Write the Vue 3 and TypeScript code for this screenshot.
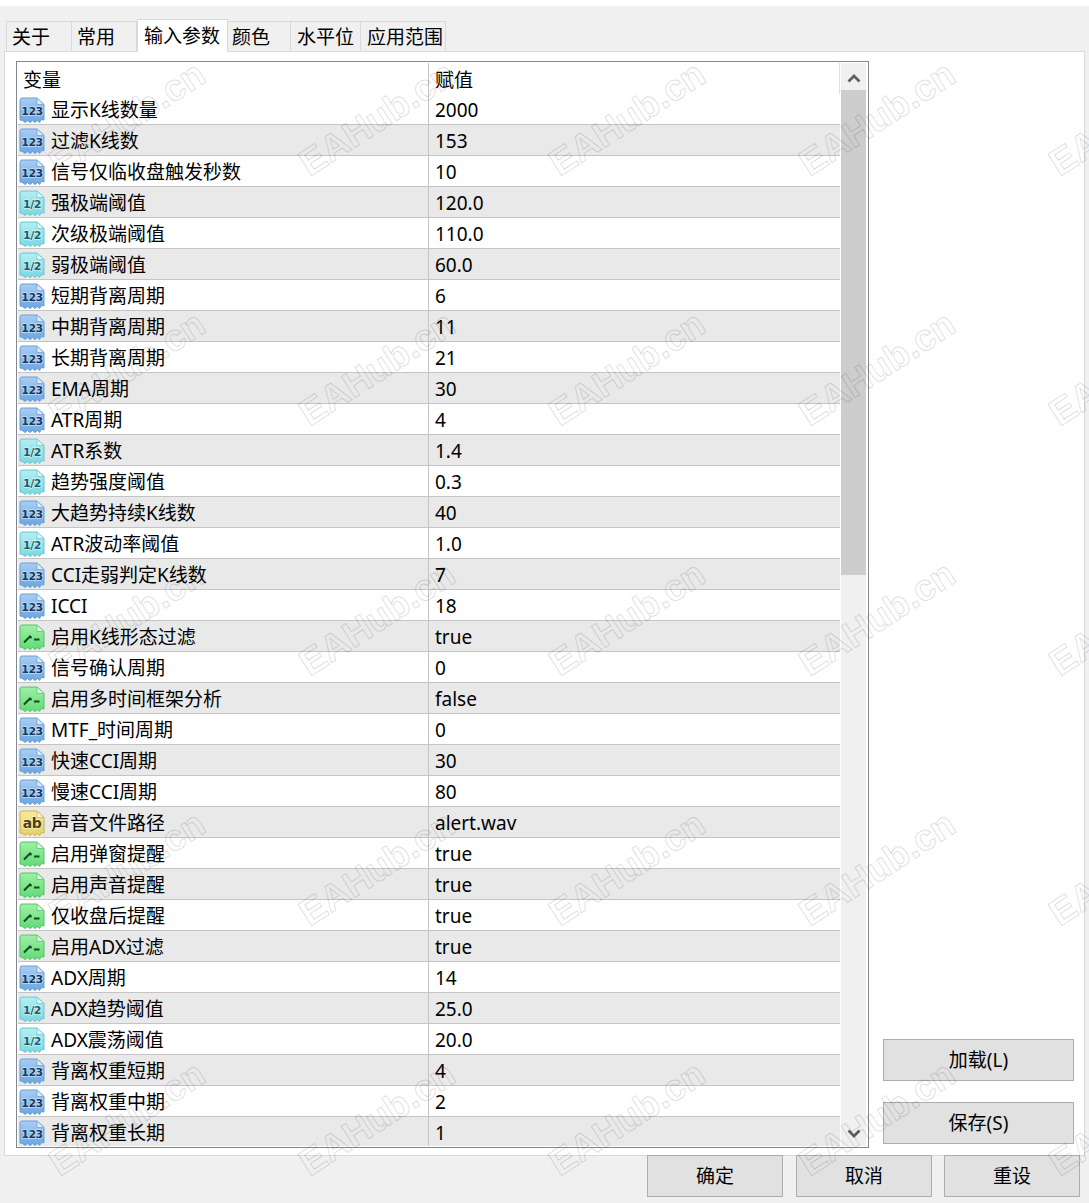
<script setup lang="ts">
type Kind = 'int' | 'dbl' | 'bool' | 'str'

const tabs = [
  { label: '关于', w: 66, pad: 5 },
  { label: '常用', w: 65, pad: 5 },
  { label: '输入参数', w: 91, pad: 6, active: true },
  { label: '颜色', w: 63, pad: 4 },
  { label: '水平位', w: 70, pad: 6 },
  { label: '应用范围', w: 85, pad: 6 },
]

const rows: [Kind, string, string][] = [
  ['int', '显示K线数量', '2000'],
  ['int', '过滤K线数', '153'],
  ['int', '信号仅临收盘触发秒数', '10'],
  ['dbl', '强极端阈值', '120.0'],
  ['dbl', '次级极端阈值', '110.0'],
  ['dbl', '弱极端阈值', '60.0'],
  ['int', '短期背离周期', '6'],
  ['int', '中期背离周期', '11'],
  ['int', '长期背离周期', '21'],
  ['int', 'EMA周期', '30'],
  ['int', 'ATR周期', '4'],
  ['dbl', 'ATR系数', '1.4'],
  ['dbl', '趋势强度阈值', '0.3'],
  ['int', '大趋势持续K线数', '40'],
  ['dbl', 'ATR波动率阈值', '1.0'],
  ['int', 'CCI走弱判定K线数', '7'],
  ['int', 'ICCI', '18'],
  ['bool', '启用K线形态过滤', 'true'],
  ['int', '信号确认周期', '0'],
  ['bool', '启用多时间框架分析', 'false'],
  ['int', 'MTF_时间周期', '0'],
  ['int', '快速CCI周期', '30'],
  ['int', '慢速CCI周期', '80'],
  ['str', '声音文件路径', 'alert.wav'],
  ['bool', '启用弹窗提醒', 'true'],
  ['bool', '启用声音提醒', 'true'],
  ['bool', '仅收盘后提醒', 'true'],
  ['bool', '启用ADX过滤', 'true'],
  ['int', 'ADX周期', '14'],
  ['dbl', 'ADX趋势阈值', '25.0'],
  ['dbl', 'ADX震荡阈值', '20.0'],
  ['int', '背离权重短期', '4'],
  ['int', '背离权重中期', '2'],
  ['int', '背离权重长期', '1'],
]

const palette: Record<Kind, { top: string; bottom: string; edge: string; ink: string; text: string }> = {
  int: { top: '#a9cdf2', bottom: '#6aa6e2', edge: '#6a9fd6', ink: '#143a63', text: '123' },
  dbl: { top: '#b4eef2', bottom: '#79d8e2', edge: '#6cc4d0', ink: '#14606e', text: '1/2' },
  bool: { top: '#9ef0a6', bottom: '#62da75', edge: '#58c06a', ink: '#0f4a22', text: '' },
  str: { top: '#f7ea9c', bottom: '#e6d064', edge: '#c9b252', ink: '#4f4008', text: 'ab' },
}

const body = 'M1 3.5Q1 1 3 1H18L25 7.5V23L22.5 22.5L20.5 25.5L18.5 23.5L16 25.5L13.5 23.5L11 25.5L8.5 23.5L6 25.5L3.5 23.5L1 23Z'

const marks: { x: number; y: number }[] = []
for (let y = 0; y < 5; y++) {
  for (let x = 0; x < 5; x++) marks.push({ x: 53 + x * 250, y: 146 + y * 250 })
}
</script>

<template>
  <div class="dialog">
    <div class="strip"></div>
    <div class="tabs">
      <div
        v-for="t in tabs"
        :key="t.label"
        :class="['tab', { active: t.active }]"
        :style="{ width: t.w + 'px', paddingLeft: t.pad + 'px' }"
      >
        {{ t.label }}
      </div>
    </div>

    <div class="panel">
      <div class="list">
        <div class="table">
          <div class="head">
            <span class="col-a">变量</span>
            <span class="col-b">赋值</span>
          </div>
          <div v-for="(r, i) in rows" :key="r[1]" :class="['row', { alt: i % 2 === 1 }]">
            <span class="col-a name">
              <svg class="ico" width="26" height="26" viewBox="0 0 26 26">
                <defs>
                  <linearGradient :id="'g' + i" x1="0" y1="0" x2="0" y2="1">
                    <stop offset="0" :stop-color="palette[r[0]].top" />
                    <stop offset="1" :stop-color="palette[r[0]].bottom" />
                  </linearGradient>
                </defs>
                <path :d="body" :fill="'url(#g' + i + ')'" :stroke="palette[r[0]].edge" />
                <path d="M18 1V7.5H25Z" fill="#ffffff" fill-opacity="0.65" :stroke="palette[r[0]].edge" stroke-width="0.7" />
                <text
                  v-if="palette[r[0]].text"
                  x="13"
                  y="18"
                  text-anchor="middle"
                  :class="['ico-text', r[0]]"
                  :fill="palette[r[0]].ink"
                >{{ palette[r[0]].text }}</text>
                <path
                  v-else
                  d="M5 18.5L11 12.5L12.5 14M15 15.5H20.5"
                  fill="none"
                  :stroke="palette[r[0]].ink"
                  stroke-width="2"
                />
              </svg>
              <span class="label">{{ r[1] }}</span>
            </span>
            <span class="col-b">{{ r[2] }}</span>
          </div>
        </div>
        <div class="scrollbar">
          <div class="arrow">
            <svg width="14" height="10" viewBox="0 0 14 10"><path d="M1.5 8.5L7 3L12.5 8.5" fill="none" stroke="#606060" stroke-width="2.8" /></svg>
          </div>
          <div class="thumb"></div>
          <div class="rest"></div>
          <div class="arrow">
            <svg width="14" height="10" viewBox="0 0 14 10"><path d="M1.5 1.5L7 7L12.5 1.5" fill="none" stroke="#606060" stroke-width="2.8" /></svg>
          </div>
        </div>
      </div>

      <div class="side">
        <button class="btn side-btn">加载(L)</button>
        <button class="btn side-btn">保存(S)</button>
      </div>
    </div>

    <div class="footer">
      <button class="btn foot-btn">确定</button>
      <button class="btn foot-btn">取消</button>
      <button class="btn foot-btn">重设</button>
    </div>

    <div class="watermarks">
      <span
        v-for="(m, i) in marks"
        :key="i"
        class="mark"
        :style="{ left: m.x + 'px', top: m.y + 'px' }"
      >EAHub.cn</span>
    </div>
  </div>
</template>

<style>
body {
  background: #f0f0f0;
}
</style>

<style scoped>
.dialog {
  position: relative;
  width: 1089px;
  height: 1203px;
  overflow: hidden;
  background: #f0f0f0;
  font-family: 'Noto Sans', 'Noto Sans CJK SC', sans-serif;
  font-size: 19px;
  color: #000;
}

.strip {
  height: 6px;
  background: #fff;
}

.tabs {
  display: flex;
  align-items: flex-end;
  height: 45px;
  padding-left: 6px;
}

.tab {
  box-sizing: border-box;
  height: 30px;
  border: 1px solid #d9d9d9;
  border-bottom: none;
  border-left-width: 0;
  line-height: 31px;
  white-space: nowrap;
}

.tab:first-child {
  border-left-width: 1px;
}

.tab.active {
  height: 33px;
  background: #fff;
  border-left-width: 1px;
  margin-bottom: -1px;
  position: relative;
  line-height: 33px;
}

.panel {
  box-sizing: border-box;
  display: flex;
  margin-left: 4px;
  width: 1081px;
  height: 1105px;
  background: #fff;
  border: 1px solid #d9d9d9;
  padding: 9px 11px 6px;
}

.list {
  box-sizing: border-box;
  display: flex;
  flex: none;
  width: 853px;
  height: 1087px;
  border: 1px solid #828790;
  padding: 1px;
  overflow: hidden;
}

.table {
  flex: none;
  width: 822px;
  overflow: hidden;
}

.head {
  box-sizing: border-box;
  display: flex;
  height: 31px;
  line-height: 35px;
  border-right: 1px solid #e0e0e0;
}

.row {
  box-sizing: border-box;
  display: flex;
  height: 31px;
  line-height: 32px;
  border-bottom: 1px solid #c4c4c4;
  background: #fff;
}

.row.alt {
  background: #e9e9e9;
}

.col-a {
  box-sizing: border-box;
  width: 411px;
  padding-left: 5px;
  white-space: nowrap;
  border-right: 1px solid #c4c4c4;
}

.col-b {
  padding-left: 6px;
}

.name {
  display: flex;
  align-items: center;
  padding-left: 0;
  gap: 6px;
}

.label {
  padding-top: 2px;
}

.ico {
  flex: none;
  margin: 1px 0 0 1px;
}

.ico-text {
  font-family: 'DejaVu Sans', sans-serif;
  font-weight: 700;
  font-size: 11px;
  letter-spacing: -0.5px;
  stroke: rgba(255, 255, 255, 0.55);
  stroke-width: 1.5px;
  paint-order: stroke;
}

.ico-text.str {
  font-size: 14px;
}

.scrollbar {
  display: flex;
  flex: none;
  flex-direction: column;
  width: 25px;
  margin-left: 1px;
  background: #f0f0f0;
}

.arrow {
  display: flex;
  align-items: center;
  justify-content: center;
  height: 27px;
  padding-top: 3px;
  box-sizing: border-box;
  flex: none;
}

.thumb {
  height: 485px;
  background: #cdcdcd;
  flex: none;
}

.rest {
  flex: 1;
}

.side {
  flex: 1;
  display: flex;
  flex-direction: column;
  justify-content: flex-end;
  align-items: flex-end;
  gap: 21px;
  padding-bottom: 5px;
}

.btn {
  box-sizing: border-box;
  height: 42px;
  background: #e1e1e1;
  border: 1px solid #adadad;
  font: inherit;
  color: #000;
  padding: 0 0 2px;
}

.side-btn {
  width: 191px;
  margin-right: -1px;
}

.footer {
  display: flex;
  justify-content: flex-end;
  gap: 12px;
  margin-top: -1px;
  padding-right: 9px;
  position: relative;
}

.foot-btn {
  width: 136px;
}

.foot-btn:first-child {
  margin-right: 1px;
}

.watermarks {
  position: absolute;
  inset: 0;
  pointer-events: none;
}

.mark {
  position: absolute;
  font-family: 'Liberation Sans', sans-serif;
  font-size: 37px;
  font-weight: 700;
  line-height: 41px;
  white-space: nowrap;
  color: transparent;
  -webkit-text-stroke: 1px rgba(0, 0, 0, 0.15);
  transform: rotate(-33deg);
  transform-origin: left center;
}
</style>
